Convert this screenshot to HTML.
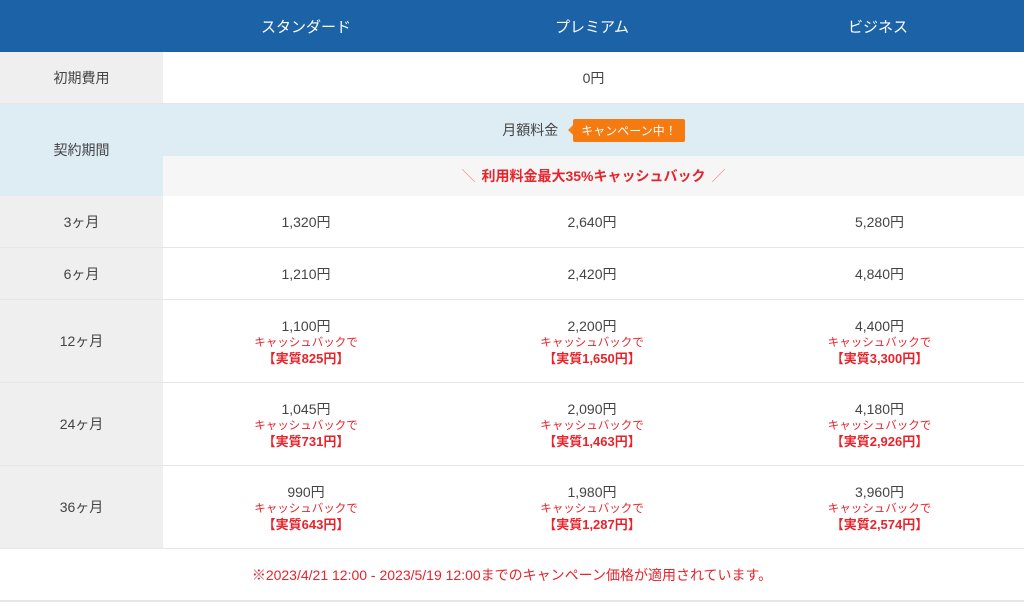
<!DOCTYPE html>
<html><head><meta charset="utf-8"><style>
*{margin:0;padding:0;box-sizing:border-box}
body{width:1024px;height:605px;background:#fff;font-family:"Liberation Sans","Noto Sans CJK JP",sans-serif;color:#444;position:relative;overflow:hidden;font-size:14px}
.a{position:absolute;display:flex;align-items:center;justify-content:center;flex-direction:column;text-align:center}
.hd{background:#1b62a6;color:#fff;font-size:15px}
.l{background:#efefef;left:0;width:163px;color:#444}
.b{border-bottom:1px solid #e6e6e6}
.r{color:#e8232b;font-size:11.5px;line-height:14px}
.r2{color:#e8232b;font-size:13px;font-weight:bold;line-height:17px}
.p{font-size:14px;line-height:20px}
</style></head><body>
<div class="a hd" style="left:0;top:0;width:1024px;height:52px"></div>
<div class="a" style="left:163px;top:0;width:286px;height:52px;color:#fff;font-size:15px">スタンダード</div>
<div class="a" style="left:449px;top:0;width:286px;height:52px;color:#fff;font-size:15px">プレミアム</div>
<div class="a" style="left:735px;top:0;width:286px;height:52px;color:#fff;font-size:15px">ビジネス</div>

<div class="a l b" style="top:52px;height:52px">初期費用</div>
<div class="a b" style="left:163px;top:52px;width:861px;height:52px">0円</div>

<div class="a" style="left:0;top:104px;width:163px;height:92px;background:#deedf4;font-size:14px">契約期間</div>
<div class="a" style="left:163px;top:104px;width:861px;height:52px;background:#deedf4;flex-direction:row">
<span style="font-size:14px">月額料金</span>
<span style="width:0;height:0;border:5px solid transparent;border-right-color:#f5821f;margin-left:5px"></span>
<span style="background:#f57b10;color:#fff;font-size:12px;padding:3px 8px;border-radius:2px">キャンペーン中！</span>
</div>
<div class="a" style="left:163px;top:156px;width:861px;height:40px;background:#f6f6f6;flex-direction:row;color:#e8232b;font-weight:bold;font-size:14px"><span style="font-weight:normal;color:#f08080;margin-right:6px">＼</span>利用料金最大35%キャッシュバック<span style="font-weight:normal;color:#f08080;margin-left:6px">／</span></div>

<div class="a l b" style="top:196px;height:52px">3ヶ月</div>
<div class="a b p" style="left:163px;top:196px;width:286px;height:52px">1,320円</div>
<div class="a b p" style="left:449px;top:196px;width:286px;height:52px">2,640円</div>
<div class="a b p" style="left:735px;top:196px;width:289px;height:52px">5,280円</div>

<div class="a l b" style="top:248px;height:52px">6ヶ月</div>
<div class="a b p" style="left:163px;top:248px;width:286px;height:52px">1,210円</div>
<div class="a b p" style="left:449px;top:248px;width:286px;height:52px">2,420円</div>
<div class="a b p" style="left:735px;top:248px;width:289px;height:52px">4,840円</div>

<div class="a l b" style="top:300px;height:83px">12ヶ月</div>
<div class="a b" style="left:163px;top:300px;width:286px;height:83px"><div class="p">1,100円</div><div class="r">キャッシュバックで</div><div class="r2">【実質825円】</div></div>
<div class="a b" style="left:449px;top:300px;width:286px;height:83px"><div class="p">2,200円</div><div class="r">キャッシュバックで</div><div class="r2">【実質1,650円】</div></div>
<div class="a b" style="left:735px;top:300px;width:289px;height:83px"><div class="p">4,400円</div><div class="r">キャッシュバックで</div><div class="r2">【実質3,300円】</div></div>

<div class="a l b" style="top:383px;height:83px">24ヶ月</div>
<div class="a b" style="left:163px;top:383px;width:286px;height:83px"><div class="p">1,045円</div><div class="r">キャッシュバックで</div><div class="r2">【実質731円】</div></div>
<div class="a b" style="left:449px;top:383px;width:286px;height:83px"><div class="p">2,090円</div><div class="r">キャッシュバックで</div><div class="r2">【実質1,463円】</div></div>
<div class="a b" style="left:735px;top:383px;width:289px;height:83px"><div class="p">4,180円</div><div class="r">キャッシュバックで</div><div class="r2">【実質2,926円】</div></div>

<div class="a l b" style="top:466px;height:83px">36ヶ月</div>
<div class="a b" style="left:163px;top:466px;width:286px;height:83px"><div class="p">990円</div><div class="r">キャッシュバックで</div><div class="r2">【実質643円】</div></div>
<div class="a b" style="left:449px;top:466px;width:286px;height:83px"><div class="p">1,980円</div><div class="r">キャッシュバックで</div><div class="r2">【実質1,287円】</div></div>
<div class="a b" style="left:735px;top:466px;width:289px;height:83px"><div class="p">3,960円</div><div class="r">キャッシュバックで</div><div class="r2">【実質2,574円】</div></div>

<div class="a" style="left:0;top:549px;width:1024px;height:53px;color:#e8232b;font-size:14px;border-bottom:2px solid #e6e6e6">※2023/4/21 12:00 - 2023/5/19 12:00までのキャンペーン価格が適用されています。</div>
</body></html>
